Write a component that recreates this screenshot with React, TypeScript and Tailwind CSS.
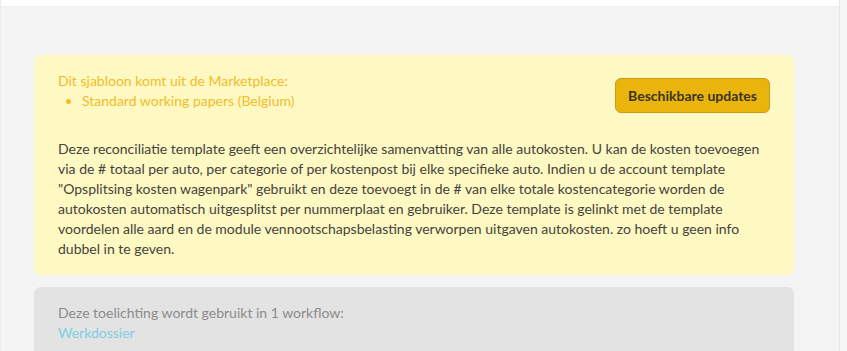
export default function App() {
    return (
        <div className="w-[847px] h-[351px] overflow-hidden flex bg-[#f4f4f4] font-['Lato','Open_Sans',sans-serif] text-[14px] leading-[20px]">
            {/* Main column */}
            <div className="flex-1 flex flex-col border-l border-[#ececec]">
                <div className="h-[7px] bg-white shrink-0 border-b border-[#efefef]"></div>

                <div className="pl-[33px] pr-[45px] pt-[48px] flex flex-col gap-[12px]">
                    {/* Marketplace notice */}
                    <div className="bg-[#fef8c3] rounded-[7px] px-[24px] pt-[16px] pb-[16px]">
                        <div className="flex items-start justify-between">
                            <div className="text-[#f2bd27]">
                                <p>Dit sjabloon komt uit de Marketplace:</p>
                                <ul className="list-disc pl-[24px] marker:text-[#f2bd27]">
                                    <li>Standard working papers (Belgium)</li>
                                </ul>
                            </div>
                            <button className="mt-[7px] h-[35px] px-[12px] rounded-[6px] bg-[#e9b40b] border border-[#c99a1c] text-[#3b3526] font-bold text-[14px]">
                                Beschikbare updates
                            </button>
                        </div>

                        <p className="mt-[26px] text-[#45433c]">
                            Deze reconciliatie template geeft een overzichtelijke samenvatting van alle autokosten. U kan de kosten toevoegen
                            via de # totaal per auto, per categorie of per kostenpost bij elke specifieke auto. Indien u de account template
                            "Opsplitsing kosten wagenpark" gebruikt en deze toevoegt in de # van elke totale kostencategorie worden de
                            autokosten automatisch uitgesplitst per nummerplaat en gebruiker. Deze template is gelinkt met de template
                            voordelen alle aard en de module vennootschapsbelasting verworpen uitgaven autokosten. zo hoeft u geen info
                            dubbel in te geven.
                        </p>
                    </div>

                    {/* Workflow usage */}
                    <div className="bg-[#e3e3e3] rounded-[7px] px-[24px] pt-[16px] pb-[16px] h-[120px]">
                        <p className="text-[#8b8b8b]">Deze toelichting wordt gebruikt in 1 workflow:</p>
                        <a href="#" className="text-[#7dcfe1]">Werkdossier</a>
                    </div>
                </div>
            </div>

            {/* Right edge strip */}
            <div className="w-[8px] shrink-0 bg-[#f7f7f7] border-l border-[#e6e6e6]"></div>
        </div>
    );
}
